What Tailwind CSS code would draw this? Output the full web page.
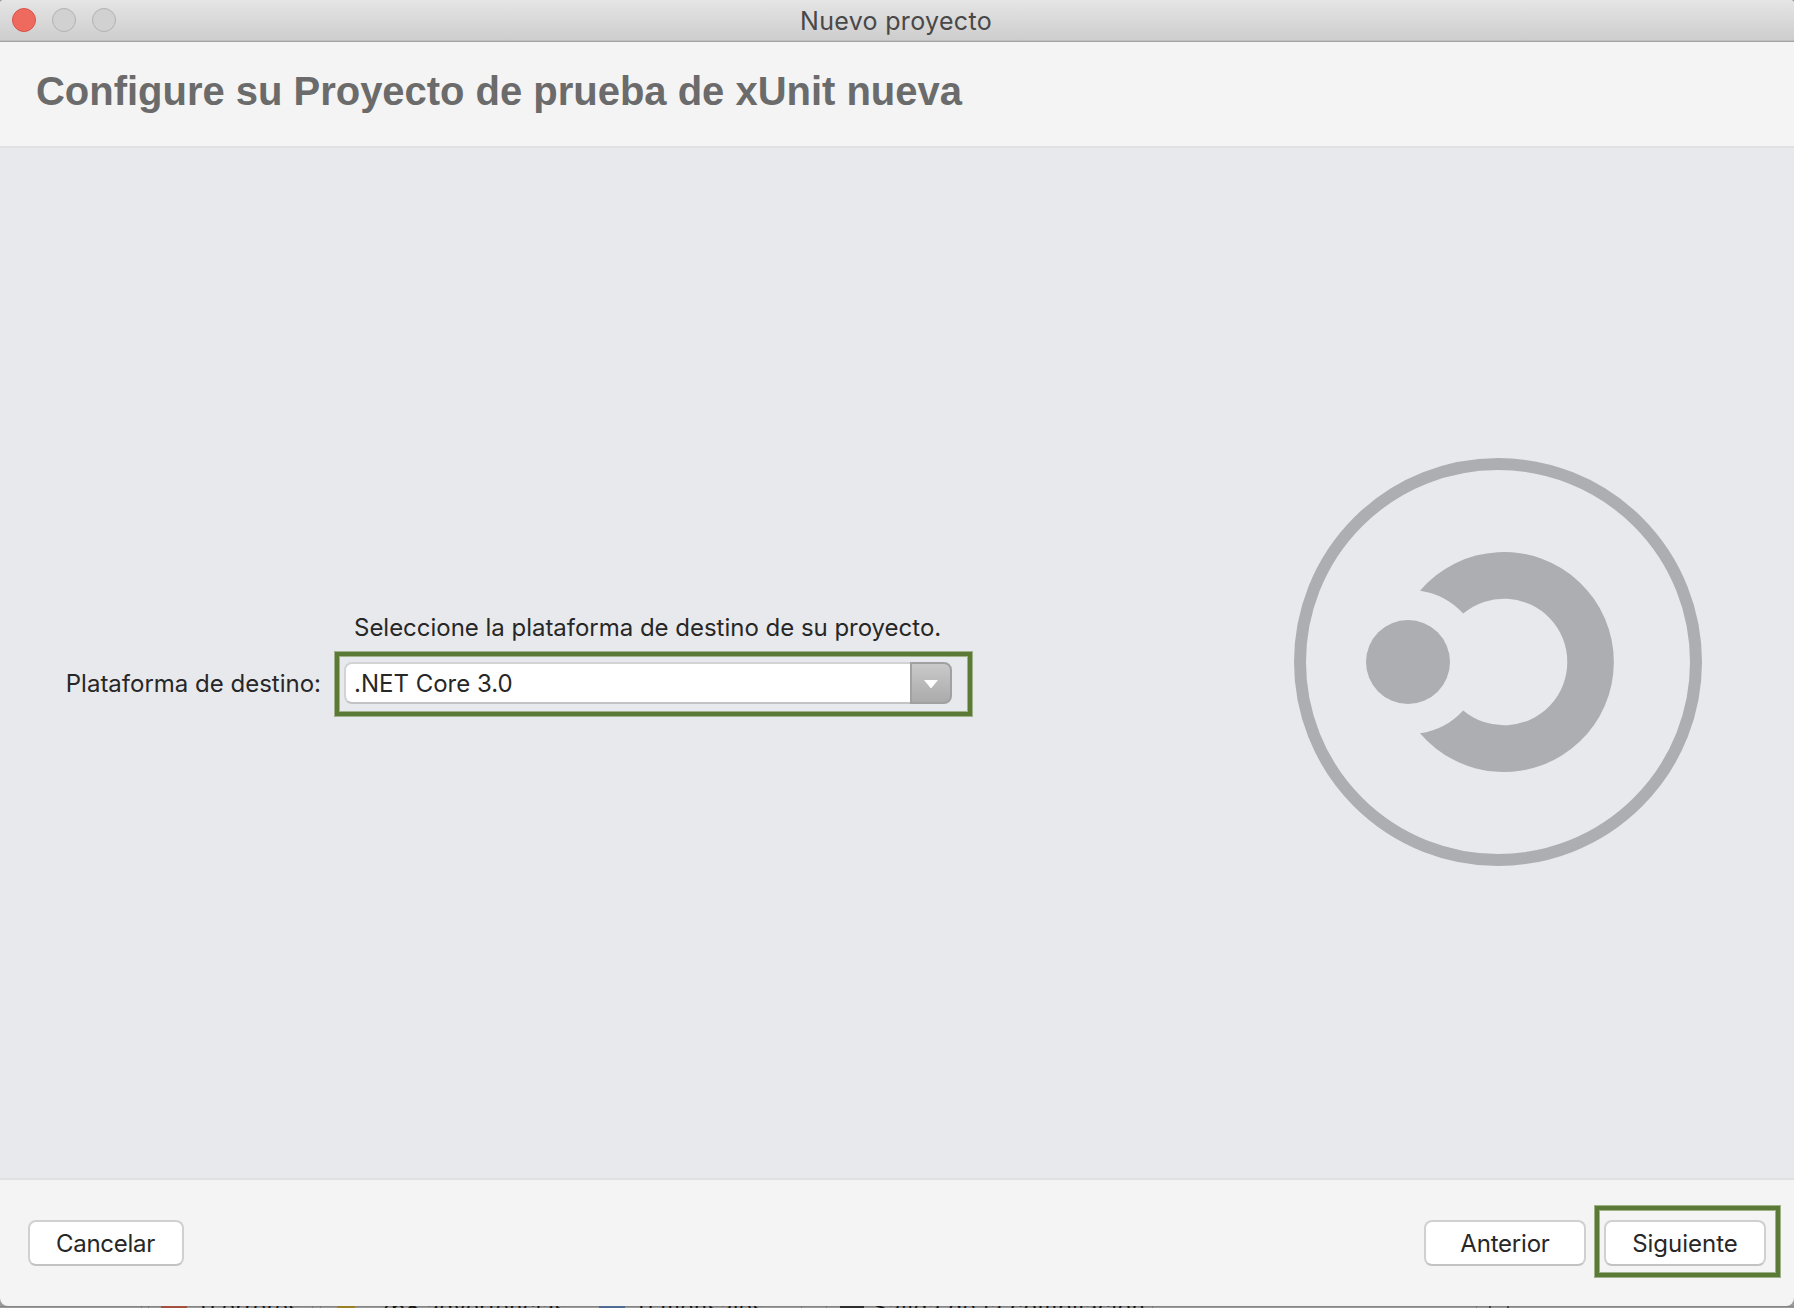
<!DOCTYPE html>
<html lang="es">
<head>
<meta charset="utf-8">
<title>Nuevo proyecto</title>
<script src="https://cdn.jsdelivr.net/npm/@tailwindcss/browser@4"></script>
</head>
<body class="h-[1308px] w-[1794px] overflow-hidden bg-[#9b9b9b] font-[Inter,sans-serif] text-2xl text-[#272727]">
<div class="relative flex h-[1308px] flex-col">
  <main class="flex h-[1306px] shrink-0 flex-col overflow-hidden rounded-t-[4px] rounded-b-[8px] bg-[#f4f4f4]">
    <!-- Title bar -->
    <div class="grid h-[42px] shrink-0 grid-cols-[1fr_auto_1fr] border-b border-[#a3a3a3] bg-linear-to-b from-[#e5e5e5] to-[#cdcdcd] shadow-[inset_0_-1px_0_#bfbfbf]">
      <div class="flex gap-4 pt-2 pl-3">
        <span class="size-6 rounded-full border border-[#d9534b] bg-[#ee6a5e]"></span>
        <span class="size-6 rounded-full border border-[#b1b1b1] bg-[#d1d1d1]"></span>
        <span class="size-6 rounded-full border border-[#b1b1b1] bg-[#d1d1d1]"></span>
      </div>
      <div class="pt-[6px] pr-[2px] text-[25px] leading-[30px] tracking-[0.33px] text-[#484848]">Nuevo proyecto</div>
      <div></div>
    </div>

    <header class="h-[106px] shrink-0 border-b-2 border-[#dfe0e1] pt-[26px] pl-9">
      <h1 class="font-['Liberation_Sans',sans-serif] text-[40px] leading-[46px] font-bold tracking-[-0.02px] text-[#6b6b6b]">Configure su Proyecto de prueba de xUnit nueva</h1>
    </header>

    <section class="flex h-[1030px] shrink-0 bg-[#e7e9ed]">
      <div class="grid w-[1280px] grid-cols-[334px_1fr] content-start pt-[465px] leading-[30px]">
        <p class="col-start-2 h-[38px] pl-[20px] tracking-[-0.02px]">Seleccione la plataforma de destino de su proyecto.</p>
        <label class="pt-[18px] pr-[13px] text-right">Plataforma de destino:</label>
        <div class="mt-px ml-px h-[64px] w-[637px] border-4 border-[#5a7a35] pt-[6px] pl-[5px] shadow-[0_0_0_1px_#9fb28c,inset_0_0_0_1px_#9fb28c]">
          <div class="flex h-[42px] w-[608px]">
            <div class="w-[566px] rounded-l-lg border-2 border-r-0 border-[#d3d3d5] border-b-[#c3c3c5] bg-white pt-[5px] pl-[8px]">.NET Core 3.0</div>
            <div class="flex w-[42px] items-center justify-center rounded-r-lg border-2 border-[#a1a1a1] bg-linear-to-b from-[#c9c9c9] to-[#ababab]">
              <svg class="mt-[2px] h-2 w-3.5" viewBox="0 0 14 8"><path d="M0 0H14L7 8.5Z" fill="#fff"/></svg>
            </div>
          </div>
        </div>
      </div>
      <svg class="mt-[292px] size-[440px]" viewBox="0 0 440 440" fill="#adaeb2">
        <circle cx="218" cy="222" r="198" fill="none" stroke="#adaeb2" stroke-width="12"/>
        <circle cx="128" cy="222" r="42"/>
        <path d="M140 150.8A110 110 0 1 1 140 293.2A73 73 0 0 0 183.2 270.4A63.3 63.3 0 1 0 183.2 173.6A73 73 0 0 0 140 150.8Z"/>
      </svg>
    </section>

    <footer class="flex h-[128px] shrink-0 items-start border-t-2 border-[#dfe0e2] px-7 leading-[30px]">
      <button class="mt-10 h-[46px] w-[156px] rounded-lg border-2 border-[#d0d0d0] border-b-[#c2c2c2] bg-white pt-[2px] pr-px tracking-[-0.25px]">Cancelar</button>
      <button class="mt-10 ml-auto h-[46px] w-[162px] rounded-lg border-2 border-[#d0d0d0] border-b-[#c2c2c2] bg-white pt-[2px] tracking-[-0.2px]">Anterior</button>
      <div class="mt-[26px] -mr-[14px] ml-[9px] h-[71px] w-[185px] border-4 border-[#5a7a35] pt-[10px] pl-[5px] shadow-[0_0_0_1px_#9fb28c,inset_0_0_0_1px_#9fb28c]">
        <button class="h-[46px] w-[162px] rounded-lg border-2 border-[#d0d0d0] border-b-[#c2c2c2] bg-white pt-[2px]">Siguiente</button>
      </div>
    </footer>
  </main>

  <!-- Status strip of the window behind, visible below the dialog -->
  <div class="flex h-[2px] items-start overflow-hidden bg-[#9b9b9b] pl-[141px] text-[22px] leading-[28px] whitespace-nowrap text-[#151515] shadow-[inset_0_1px_0_#858585]">
    <span class="h-7 w-2 shrink-0 border-x border-[#777]"></span>
    <span class="ml-3 h-7 w-[26px] shrink-0 bg-[#a3503f]"></span>
    <span class="-mt-[13px] ml-[14px] w-[111px] shrink-0 tracking-[0.5px]">0 errores</span>
    <span class="h-7 w-[9px] shrink-0 border-x border-[#777]"></span>
    <span class="ml-4 h-7 w-[18px] shrink-0 bg-[#9c8026]"></span>
    <span class="-mt-[13px] ml-[24px] w-[199px] shrink-0 tracking-[0.5px]">768 advertencias</span>
    <span class="ml-[21px] h-7 w-[26px] shrink-0 bg-[#4f6a93]"></span>
    <span class="-mt-[13px] ml-[14px] w-[162px] shrink-0 tracking-[0.7px]">0 mensajes</span>
    <span class="h-7 w-[26px] shrink-0 border-x border-[#777]"></span>
    <span class="ml-[13px] h-7 w-6 shrink-0 bg-[#2e2e2e]"></span>
    <span class="-mt-[13px] ml-[9px] w-[279px] shrink-0 tracking-[0.9px]">Salida de la compilación</span>
    <span class="h-7 w-[325px] shrink-0 border-x border-[#777]"></span>
    <span class="ml-[12px] h-7 w-[20px] shrink-0 border-x-2 border-[#444]"></span>
  </div>
</div>
</body>
</html>
